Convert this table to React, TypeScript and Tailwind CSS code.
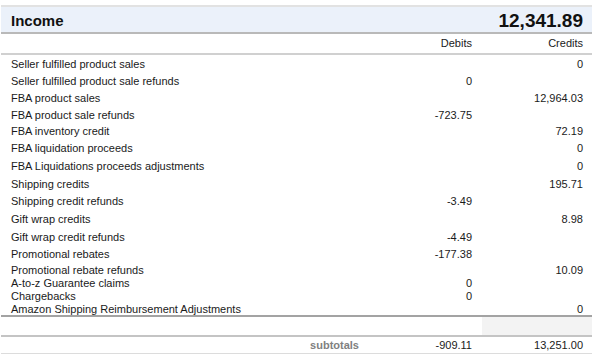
import React from "react";

type Row = {
  label: string;
  debit?: string;
  credit?: string;
  h: string;
};

const rows: Row[] = [
  { label: "Seller fulfilled product sales", credit: "0", h: "h-[18px]" },
  { label: "Seller fulfilled product sale refunds", debit: "0", h: "h-[17px]" },
  { label: "FBA product sales", credit: "12,964.03", h: "h-[17px]" },
  { label: "FBA product sale refunds", debit: "-723.75", h: "h-[16px]" },
  { label: "FBA inventory credit", credit: "72.19", h: "h-[17px]" },
  { label: "FBA liquidation proceeds", credit: "0", h: "h-[17px]" },
  { label: "FBA Liquidations proceeds adjustments", credit: "0", h: "h-[18px]" },
  { label: "Shipping credits", credit: "195.71", h: "h-[18px]" },
  { label: "Shipping credit refunds", debit: "-3.49", h: "h-[17px]" },
  { label: "Gift wrap credits", credit: "8.98", h: "h-[18px]" },
  { label: "Gift wrap credit refunds", debit: "-4.49", h: "h-[18px]" },
  { label: "Promotional rebates", debit: "-177.38", h: "h-[17px]" },
  { label: "Promotional rebate refunds", credit: "10.09", h: "h-[14px]" },
  { label: "A-to-z Guarantee claims", debit: "0", h: "h-[13px]" },
  { label: "Chargebacks", debit: "0", h: "h-[13px]" },
  { label: "Amazon Shipping Reimbursement Adjustments", credit: "0", h: "h-[12px]" },
];

export default function App() {
  return (
    <div className="h-[355px] w-[601px] overflow-hidden bg-white pt-[5px] font-['Liberation_Sans',Arial,sans-serif] text-[11px] text-[#1a1a1a]">
      <div className="ml-[1px] w-[591px]">
        <div className="flex h-[29px] items-center justify-between border-t-2 border-b-2 border-t-[#e2e2e2] border-b-[#b9b9b9] bg-[#ebf1fa] pl-[10px] pr-[9px] pt-[3px]">
          <span className="text-[15px] font-bold text-[#111]">Income</span>
          <span className="text-[19px] font-bold text-[#111]">12,341.89</span>
        </div>

        <div className="flex h-[21px] items-center border-b-2 border-[#d0d0d0] pr-[9px]">
          <div className="flex-1" />
          <div className="w-[111px] text-right">Debits</div>
          <div className="w-[111px] text-right">Credits</div>
        </div>

        {rows.map((r) => (
          <div key={r.label} className={`flex items-center pr-[9px] ${r.h}`}>
            <div className="flex-1 whitespace-nowrap pl-[10px]">{r.label}</div>
            <div className="w-[111px] text-right">{r.debit}</div>
            <div className="w-[111px] text-right">{r.credit}</div>
          </div>
        ))}

        <div className="flex h-[22px] border-t-2 border-b-2 border-t-[#a3a3a3] border-b-[#c4c4c4]">
          <div className="flex-1" />
          <div className="w-[110px] bg-[#f3f3f3]" />
        </div>

        <div className="flex h-[17px] items-center border-b border-[#dcdcdc] pr-[9px]">
          <div className="flex-1 pr-[2px] text-right font-bold text-[#808080]">subtotals</div>
          <div className="w-[111px] text-right">-909.11</div>
          <div className="w-[111px] text-right">13,251.00</div>
        </div>
      </div>
    </div>
  );
}
